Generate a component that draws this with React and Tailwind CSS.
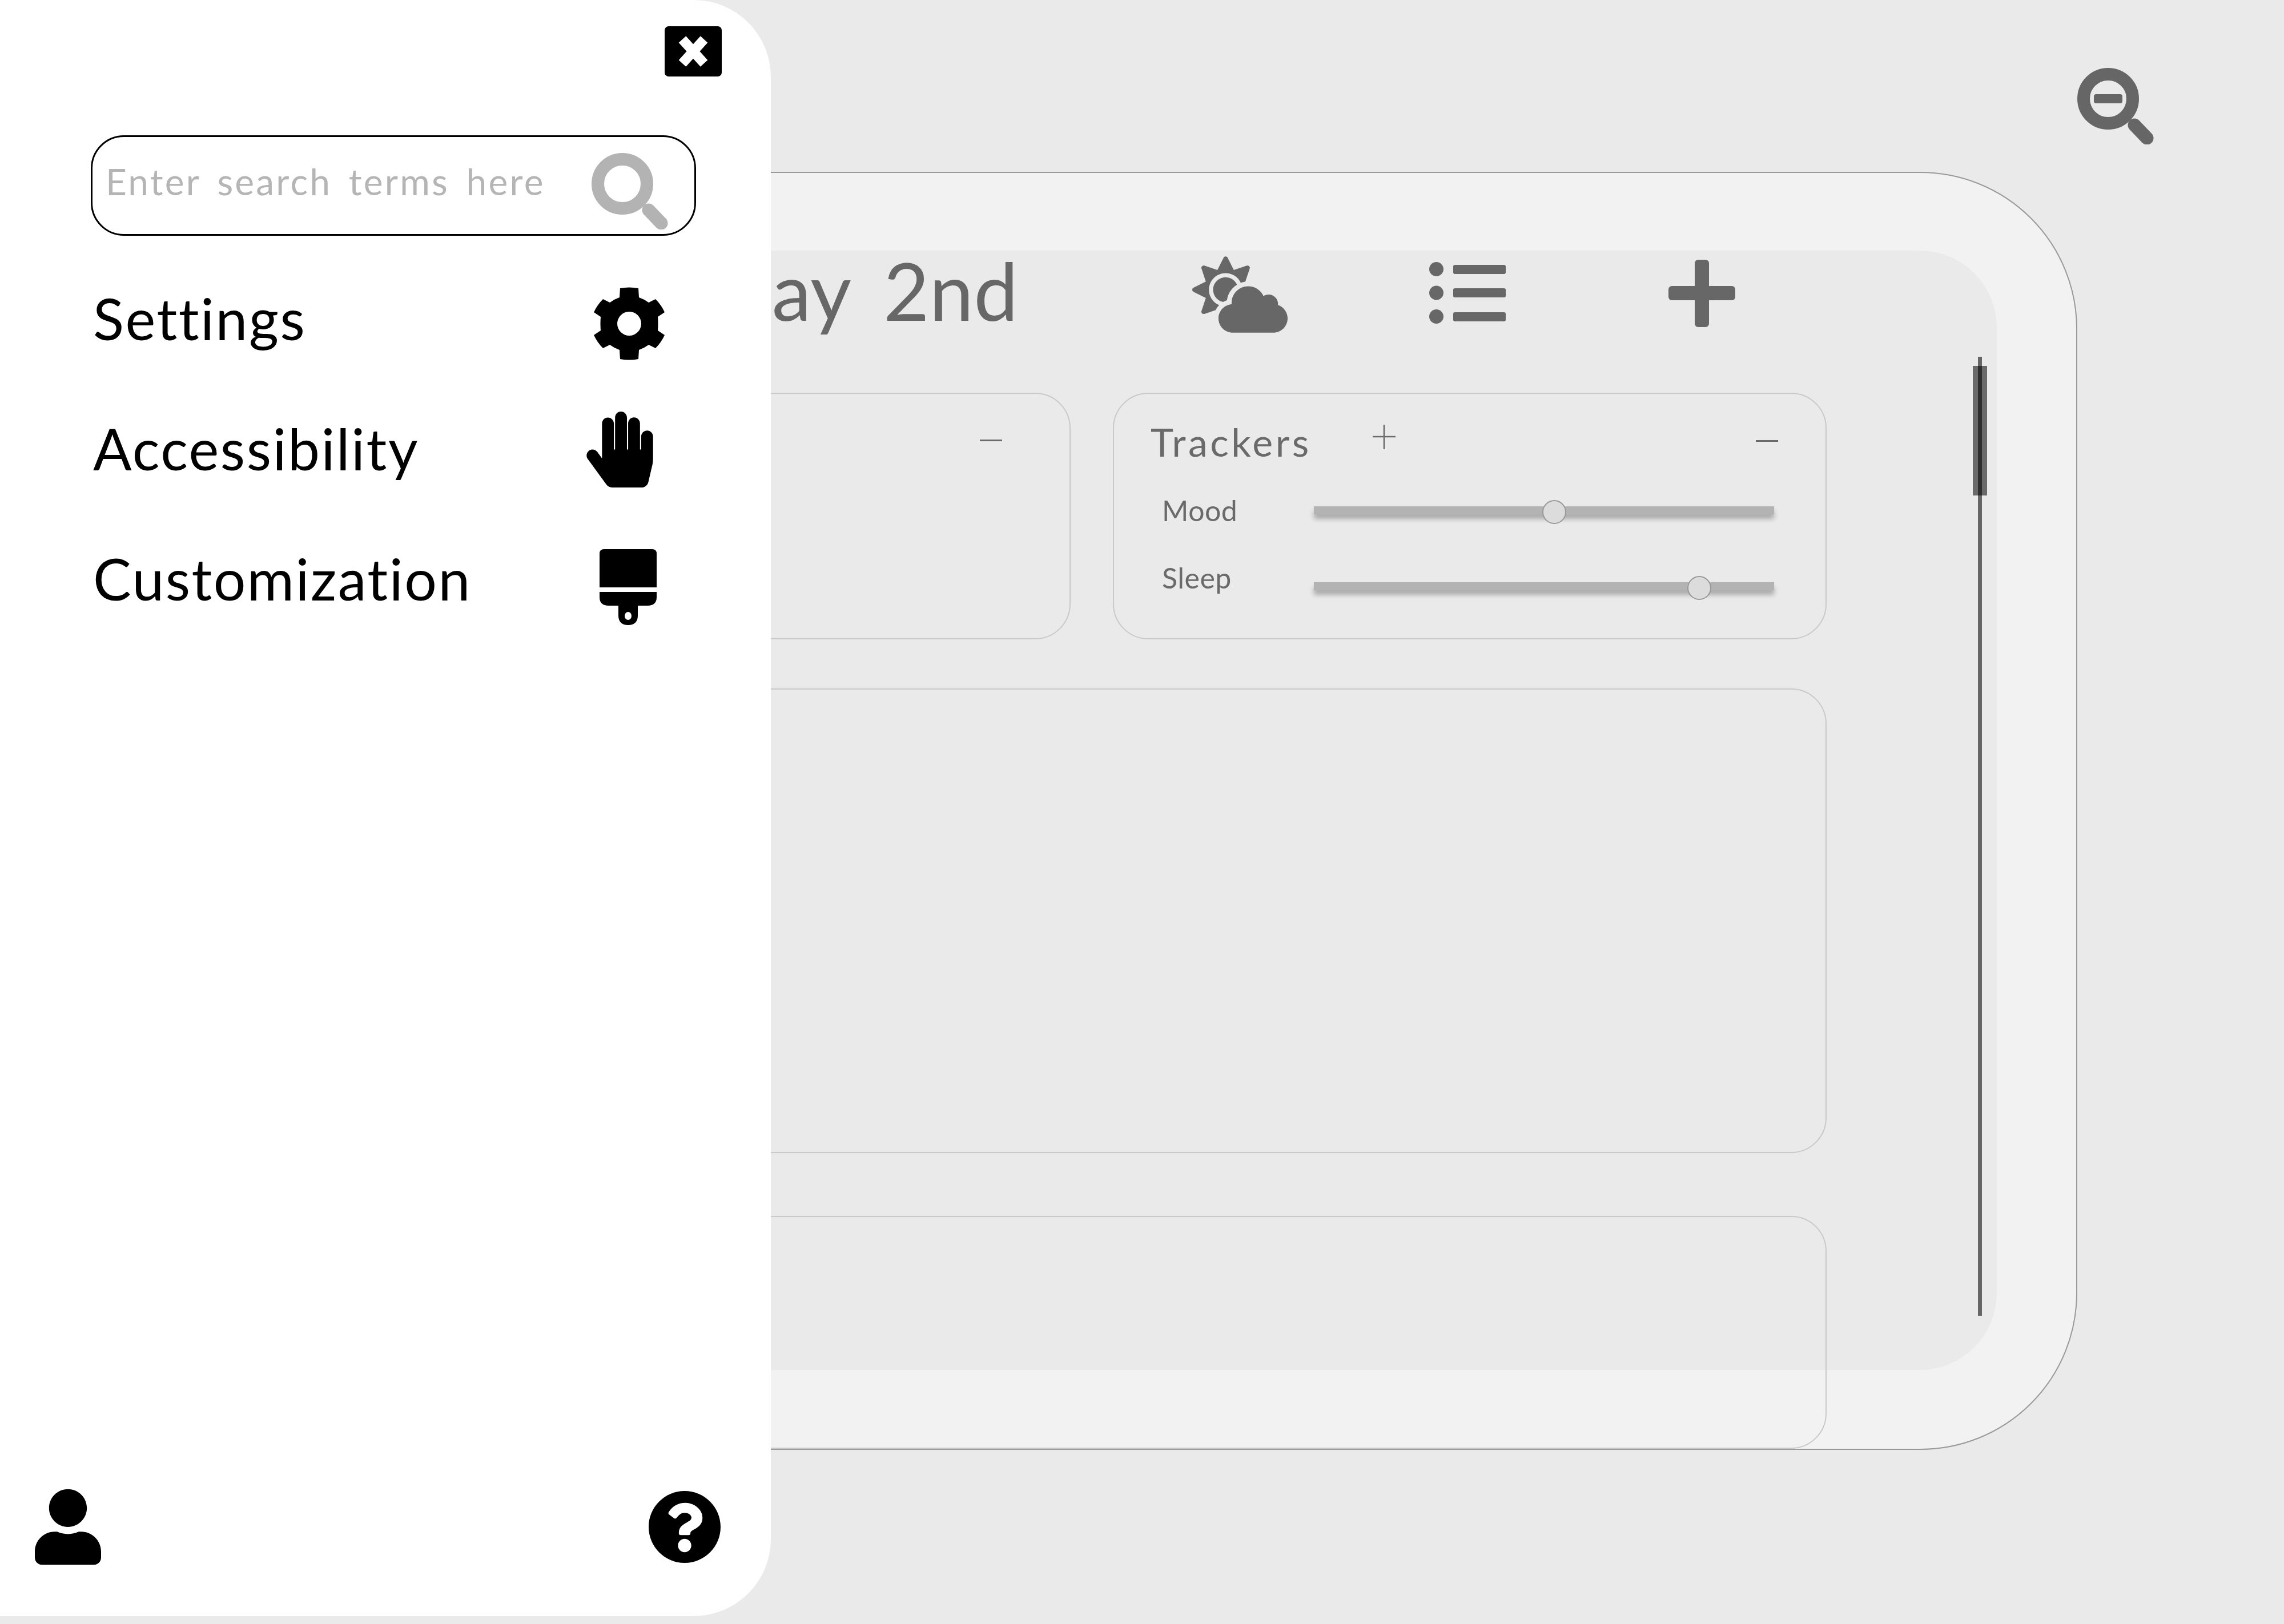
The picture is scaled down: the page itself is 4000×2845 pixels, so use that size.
import { FaCloudSun, FaHandPaper, FaQuestionCircle, FaUser } from "react-icons/fa";

const trackers = [
  { name: "Mood", value: 52.2, labelClass: "mt-[2px]", trackClass: "mt-[20px]" },
  { name: "Sleep", value: 83.7, labelClass: "mt-[5px]", trackClass: "mt-[38px]" },
];

const Magnifier = ({ className, minus }) => (
  <svg viewBox="0 0 134 134" className={className} fill="none" stroke="currentColor">
    <circle cx="54" cy="54" r="43" strokeWidth="22" />
    <path d="M100 100 L122 123" strokeWidth="23" strokeLinecap="round" />
    {minus && <rect x="29" y="46" width="50" height="16" rx="4" fill="currentColor" stroke="none" />}
  </svg>
);

const GearIcon = ({ className }) => (
  <svg viewBox="0 0 124 128" className={className} preserveAspectRatio="none">
    <path
      fillRule="evenodd"
      d="M46 2 Q62 -1 78 2 L79 18 Q88 21 96 27 L108 21 Q118 31 124 44 L112 52 Q113 64 112 76 L124 84 Q118 97 108 107 L96 101 Q88 107 79 110 L78 126 Q62 129 46 126 L45 110 Q36 107 28 101 L16 107 Q6 97 0 84 L12 76 Q11 64 12 52 L0 44 Q6 31 16 21 L28 27 Q36 21 45 18 Z M62 43 A21 21 0 1 0 62 85 A21 21 0 1 0 62 43 Z"
    />
  </svg>
);

const BrushIcon = ({ className }) => (
  <svg viewBox="0 0 100 133" className={className}>
    <path d="M0 8 Q0 0 8 0 H92 Q100 0 100 8 V67 H0 Z" />
    <path
      fillRule="evenodd"
      d="M0 75 H100 V84 Q100 99 84 99 H67 V116 Q67 133 50 133 Q33 133 33 116 V99 H16 Q0 99 0 84 Z M50 110 A6 7 0 1 0 50 124 A6 7 0 1 0 50 110 Z"
    />
  </svg>
);

const CloseIcon = () => (
  <svg viewBox="0 0 100 88" className="w-[100px] h-[88px]">
    <rect width="100" height="88" rx="7" fill="#000" />
    <path d="M31 23 L69 65 M69 23 L31 65" stroke="#fff" strokeWidth="17" />
  </svg>
);

const ListIcon = ({ className }) => (
  <svg viewBox="0 0 134 108" className={className} fill="currentColor">
    <ellipse cx="12.5" cy="12.5" rx="12.5" ry="12.5" />
    <ellipse cx="12.5" cy="54" rx="12.5" ry="12.5" />
    <ellipse cx="12.5" cy="95.5" rx="12.5" ry="12.5" />
    <rect x="42" y="5" width="92" height="16" rx="3" />
    <rect x="42" y="46" width="92" height="16" rx="3" />
    <rect x="42" y="88" width="92" height="16" rx="3" />
  </svg>
);

const PlusIcon = ({ className }) => (
  <svg viewBox="0 0 117 118" className={className} fill="currentColor">
    <rect x="46" y="0" width="25" height="118" rx="6" />
    <rect x="0" y="46" width="117" height="25" rx="6" />
  </svg>
);

const ThinPlus = () => (
  <svg viewBox="0 0 40 43" className="w-[40px] h-[43px]" stroke="#6a6a6a" strokeWidth="2.5">
    <path d="M20 0 V43 M0 21 H40" />
  </svg>
);

const ThinMinus = () => <div className="w-[39px] h-[3px] bg-[#6a6a6a]" />;

const MenuRow = ({ label, children }) => (
  <div className="flex items-center h-[228px] pl-[163px]">
    <span className="mt-[-4px] text-[100px] leading-none tracking-[2.5px] text-black">{label}</span>
    {children}
  </div>
);

const Sidebar = () => (
  <aside className="absolute left-0 top-0 flex flex-col w-[1350px] h-[2831px] pt-[46px] bg-white rounded-r-[135px]">
    <button className="self-end mr-[86px]">
      <CloseIcon />
    </button>

    <div className="flex items-center w-[1060px] h-[176px] mt-[103px] ml-[159px] pl-[23px] border-[3px] border-black rounded-[58px]">
      <input
        placeholder="Enter search terms here"
        className="w-[790px] mt-[-16px] text-[64px] leading-none tracking-[3.2px] [word-spacing:10px] outline-none placeholder:text-[#b5b5b5]"
      />
      <Magnifier className="w-[134px] h-[134px] mt-[20px] ml-[61px] text-[#b3b3b3]" />
    </div>

    <nav className="mt-[32px]">
      <MenuRow label="Settings">
        <GearIcon className="w-[124px] h-[128px] mt-[16px] ml-auto mr-[186px]" />
      </MenuRow>
      <MenuRow label="Accessibility">
        <FaHandPaper className="w-[117px] h-[133px] ml-auto mr-[206px]" />
      </MenuRow>
      <MenuRow label="Customization">
        <BrushIcon className="w-[100px] h-[133px] mt-[26px] ml-auto mr-[200px]" />
      </MenuRow>
    </nav>

    <div className="flex items-center justify-between mt-auto px-[61px] mr-[25px] pb-[89px]">
      <FaUser className="w-[116px] h-[134px]" />
      <FaQuestionCircle className="w-[130px] h-[130px]" />
    </div>
  </aside>
);

const Card = ({ className, children }) => (
  <div className={`border-2 border-[#c9c9c9] rounded-[62px] ${className}`}>{children}</div>
);

const TrackerRow = ({ tracker }) => (
  <div className="flex items-start h-[115px]">
    <span className={`w-[286px] pl-[20px] text-[50px] leading-none tracking-[0.5px] text-[#6a6a6a] ${tracker.labelClass}`}>
      {tracker.name}
    </span>
    <div className={`relative w-[806px] h-[14px] bg-[#b3b3b3] shadow-[0_8px_8px_rgba(0,0,0,0.28)] ${tracker.trackClass}`}>
      <div
        className="absolute top-[-11px] w-[42px] h-[42px] -ml-[21px] rounded-full bg-[#dcdcdc] border-2 border-[#999]"
        style={{ left: `${tracker.value}%` }}
      />
    </div>
  </div>
);

const Scrollbar = () => (
  <div className="relative flex justify-center w-[25px] h-[1680px] mt-[186px] ml-[256px]">
    <div className="w-[7px] h-full bg-[#666]" />
    <div className="absolute top-[16px] left-0 w-[25px] h-[227px] bg-black/55" />
  </div>
);

const Content = () => (
  <div className="w-[2099px] shrink-0">
    <div className="flex items-start h-[249px] text-[#676767]">
      <h1 className="flex justify-end w-[683px] text-[139px] leading-none font-normal whitespace-nowrap [word-spacing:24px]">
        Monday, May 2nd
      </h1>
      <FaCloudSun className="w-[167px] h-[134px] mt-[10px] ml-[305px]" />
      <ListIcon className="w-[134px] h-[108px] mt-[20px] ml-[248px]" />
      <PlusIcon className="w-[117px] h-[118px] mt-[16px] ml-[285px]" />
    </div>

    <div className="flex gap-[74px] h-[432px]">
      <Card className="flex justify-end w-[778px] pr-[118px] pt-[80px]">
        <ThinMinus />
      </Card>
      <Card className="flex-1 pt-[40px] pl-[64px] pr-[90px]">
        <div className="flex items-start h-[137px]">
          <span className="mt-[4px] text-[68px] leading-[80px] tracking-[4.5px] text-[#6a6a6a]">Trackers</span>
          <div className="mt-[14px] ml-[107px]">
            <ThinPlus />
          </div>
          <div className="mt-[41px] ml-auto mr-[-7px]">
            <ThinMinus />
          </div>
        </div>
        {trackers.map((tracker) => (
          <TrackerRow key={tracker.name} tracker={tracker} />
        ))}
      </Card>
    </div>

    <Card className="h-[814px] mt-[86px]" />
    <Card className="h-[408px] mt-[110px]" />
  </div>
);

const App = () => {
  return (
    <div className="relative w-[4000px] h-[2845px] overflow-hidden bg-[#eaeaea] font-['Lato',sans-serif]">
      <div className="flex justify-end h-[301px] pt-[119px] pr-[228px] text-[#666]">
        <Magnifier className="w-[134px] h-[134px]" minus />
      </div>

      <div className="w-[2838px] h-[2239px] ml-[800px] pt-[136px] border-2 border-[#9a9a9a] rounded-[275px] bg-[#f2f2f2]">
        <div className="flex w-[2556px] h-[1961px] ml-[139px] pl-[159px] rounded-[135px] bg-[#eaeaea]">
          <Content />
          <Scrollbar />
        </div>
      </div>

      <Sidebar />
    </div>
  );
};

export default App;
